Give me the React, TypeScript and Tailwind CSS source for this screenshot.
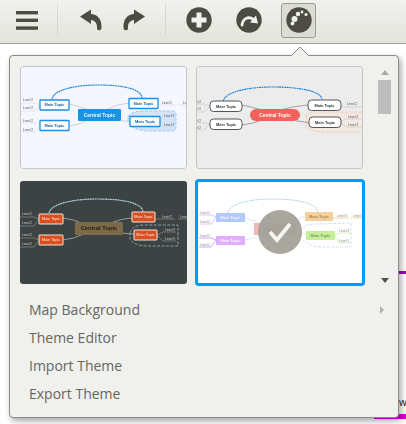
import React from "react";

const FONT = "'Liberation Sans', sans-serif";

type Box = { x: number; y: number; w: number; h: number };
type Label = { x: number; y: number; s: string };
type Theme = {
  bg: string;
  line: string;
  curve: string;
  curveD: string;
  curveW: number;
  levelText: string;
  levelLine: string;
  boundaryD: string;
  boundaryStroke: string;
  boundaryFill: string;
  central: Box & { fill: string; text: string; rx: number; fs: number };
  mainStyle: { fill: string; stroke: string; text: string; rx: number; sw: number; weight: number };
  mains: Box[];
  levels: Label[];
  levelD: string;
  lineD: string;
};

const themes: Theme[] = [
  {
    bg: "#f4f7ff",
    line: "#c9ccd4",
    curve: "#1b7fd6",
    curveD: "M32 33 C34 23 58 19 78 19 C100 19 121 22 122 32",
    curveW: 1.1,
    levelText: "#555",
    levelLine: "#d8dbe2",
    boundaryD: "M108 50 Q112 45 124 45 H152 Q156 45 156 49 V61 Q156 65 152 65 H128 Q114 65 108 56 Z",
    boundaryStroke: "#8fc4ee",
    boundaryFill: "#d3e4f8",
    central: { x: 58, y: 43, w: 43, h: 12, fill: "#1b93e0", text: "#eaf6ff", rx: 1, fs: 5 },
    mainStyle: { fill: "#ffffff", stroke: "#1b8ee6", text: "#1a5fa5", rx: 0.5, sw: 1.3, weight: 700 },
    mains: [
      { x: 20, y: 34, w: 29, h: 10 },
      { x: 20, y: 54.5, w: 29, h: 10 },
      { x: 109, y: 32.5, w: 29, h: 10 },
      { x: 110, y: 50.5, w: 30, h: 10 },
    ],
    levels: [
      { x: 8, y: 35, s: "Level 2" },
      { x: 8, y: 43, s: "Level 2" },
      { x: 8, y: 56, s: "Level 2" },
      { x: 8, y: 65, s: "Level 2" },
      { x: 147, y: 38, s: "Level 2" },
      { x: 168, y: 38, s: "Level 3" },
      { x: 149, y: 51, s: "Level 3" },
      { x: 149, y: 60, s: "Level 3" },
    ],
    levelD: "M20 39 Q16 37 14 37 H0 M20 39 Q17 44 14 45 H0 M20 59 Q16 57 14 57 H0 M20 59 Q17 65 14 66 H0 M138 39 H155 M158 39 H167 M140 55 Q142 52 143 52 H156 M140 55 Q142 61 143 61 H156",
    lineD: "M49 38 Q58 40 66 43 M49 60 Q58 59 66 55 M109 37 Q98 38 87 43 M101 55 H110",
  },
  {
    bg: "#ececec",
    line: "#999",
    curve: "#1b7fd6",
    curveD: "M27 35 C30 25 55 21 76 21 C100 21 124 24 126 33",
    curveW: 1.1,
    levelText: "#555",
    levelLine: "#ccc",
    boundaryD: "M110 50 Q112 46 120 46 L167 46 V66 H130 Q114 66 110 60 Z",
    boundaryStroke: "#f0c4ae",
    boundaryFill: "#f3e9e3",
    central: { x: 54, y: 43, w: 50, h: 12, fill: "#f2615c", text: "#fff", rx: 6, fs: 5 },
    mainStyle: { fill: "#ffffff", stroke: "#555", text: "#333", rx: 3.5, sw: 1, weight: 700 },
    mains: [
      { x: 14, y: 35, w: 32, h: 10.5 },
      { x: 14, y: 53, w: 32, h: 10.5 },
      { x: 112, y: 34, w: 33, h: 10.5 },
      { x: 113, y: 51, w: 32, h: 10.5 },
    ],
    levels: [
      { x: 0, y: 37, s: "Level 2" },
      { x: 0, y: 44, s: "Level 2" },
      { x: 0, y: 56, s: "Level 2" },
      { x: 0, y: 63, s: "Level 2" },
      { x: 156, y: 39, s: "Level 2" },
      { x: 157, y: 52, s: "Level 3" },
      { x: 157, y: 60, s: "Level 3" },
    ],
    levelD: "M14 40 L8 38 H0 M14 40 L8 46 H0 M14 58 L8 57 H0 M14 58 L8 64 H0 M145 39 L148 41 H165 M145 55 L150 53 H166 M145 57 L150 61 H166",
    lineD: "M46 39 Q56 41 66 44 M46 59 Q56 58 66 54 M112 39 Q98 40 84 44 M100 55 Q106 55 113 57",
  },
  {
    bg: "#3d4242",
    line: "#a0a6a6",
    curve: "#a8d4dc",
    curveD: "M29 32 C31 22 56 18 77 18 C100 18 122 21 123 31",
    curveW: 1.2,
    levelText: "#ccc",
    levelLine: "#8a9090",
    boundaryD: "M110 52 Q112 45 122 44 L158 44 V65 H128 Q114 65 110 58 Z",
    boundaryStroke: "#8fa8a8",
    boundaryFill: "none",
    central: { x: 55, y: 41, w: 48, h: 13, fill: "#7d6a48", text: "#241e10", rx: 1, fs: 5.8 },
    mainStyle: { fill: "#d94f1e", stroke: "#f2e6e0", text: "#fbe9df", rx: 0.5, sw: 1, weight: 400 },
    mains: [
      { x: 19, y: 33, w: 24, h: 10 },
      { x: 19, y: 54, w: 24, h: 10 },
      { x: 112, y: 31, w: 23, h: 10 },
      { x: 114, y: 49, w: 23, h: 10 },
    ],
    levels: [
      { x: 7, y: 34, s: "Level 2" },
      { x: 7, y: 43, s: "Level 2" },
      { x: 7, y: 55, s: "Level 2" },
      { x: 7, y: 64, s: "Level 2" },
      { x: 147, y: 37, s: "Level 2" },
      { x: 165, y: 37, s: "Level 3" },
      { x: 150, y: 50, s: "Level 3" },
      { x: 150, y: 59, s: "Level 3" },
    ],
    levelD: "M19 38 L14 36 H0 M19 38 L14 45 H0 M19 59 L14 57 H0 M19 59 L14 66 H0 M135 38 H155 M158 38 H167 M137 54 L143 51 H156 M137 54 L143 60 H156",
    lineD: "M43 37 Q54 38 66 44 M43 59 Q54 58 66 52 M112 37 Q98 38 87 44 M103 52 Q108 53 114 53",
  },
];

function MindMap({ t }: { t: Theme }) {
  const m = t.mainStyle;
  return (
    <svg viewBox="0 0 167 103" className="block h-full w-full">
      <path d={t.boundaryD} fill={t.boundaryFill} stroke={t.boundaryStroke} strokeWidth="0.9" strokeDasharray="3 1.5" />
      <path d={t.lineD} fill="none" stroke={t.line} strokeWidth="0.9" />
      <path d={t.levelD} fill="none" stroke={t.levelLine} strokeWidth="0.7" />
      <path d={t.curveD} fill="none" stroke={t.curve} strokeWidth={t.curveW} strokeDasharray="2 0.5" />
      {t.levels.map((l, i) => (
        <text key={i} x={l.x} y={l.y} fontSize="3.2" fill={t.levelText} fontFamily={FONT} textAnchor="middle">
          {l.s}
        </text>
      ))}
      <rect x={t.central.x} y={t.central.y} width={t.central.w} height={t.central.h} rx={t.central.rx} fill={t.central.fill} />
      <text
        x={t.central.x + t.central.w / 2}
        y={t.central.y + t.central.h / 2 + 1.7}
        textAnchor="middle"
        fontSize={t.central.fs}
        fontWeight="700"
        fill={t.central.text}
        fontFamily={FONT}
      >
        Central Topic
      </text>
      {t.mains.map((b, i) => (
        <g key={i}>
          <rect x={b.x} y={b.y} width={b.w} height={b.h} rx={m.rx} fill={m.fill} stroke={m.stroke} strokeWidth={m.sw} />
          <text x={b.x + b.w / 2} y={b.y + b.h / 2 + 1.3} textAnchor="middle" fontSize="3.9" fontWeight={m.weight} fill={m.text} fontFamily={FONT}>
            Main Topic
          </text>
        </g>
      ))}
    </svg>
  );
}

function SelectedMap() {
  const lv = { fontSize: 3.2, fill: "#888", fontFamily: FONT, textAnchor: "middle" } as const;
  const main = { fontSize: 3.9, fontWeight: 700, fontFamily: FONT, textAnchor: "middle" } as const;
  return (
    <svg viewBox="0 0 164 101" className="block h-full w-full">
      <path d="M105 47 Q108 42 118 42 L153 41 V65 H124 Q112 65 105 58" fill="none" stroke="#c6def6" strokeWidth="0.9" strokeDasharray="3 1.5" />
      <path d="M47 36 Q58 38 66 44 M47 58 Q56 57 66 52 M107 34 Q97 36 86 44 M98 52 H108" fill="none" stroke="#dfe4ee" strokeWidth="0.9" />
      <path d="M18 35 L13 33 H1 M18 35 L13 42 H1" fill="none" stroke="#e3aef2" strokeWidth="0.8" />
      <path d="M18 58 L13 56 H1 M18 58 L13 65 H1" fill="none" stroke="#c98cf0" strokeWidth="0.8" />
      <path d="M135 36 H151 M153 36 H164" fill="none" stroke="#f3cb8e" strokeWidth="0.8" />
      <path d="M137 53 L141 51 H153 M137 54 L141 61 H153" fill="none" stroke="#cdeea8" strokeWidth="0.8" />
      <path d="M30 31 C32 21 54 17 74 17 C96 17 118 20 120 30" fill="none" stroke="#aecff0" strokeWidth="0.9" strokeDasharray="2 0.5" />
      <text x="7" y="32" {...lv}>Level 2</text>
      <text x="7" y="40.5" {...lv}>Level 2</text>
      <text x="7" y="54.5" {...lv}>Level 2</text>
      <text x="7" y="63.5" {...lv}>Level 2</text>
      <text x="144" y="35" {...lv}>Level 3</text>
      <text x="160" y="35" {...lv}>Level 3</text>
      <text x="146" y="50" {...lv}>Level 3</text>
      <text x="146" y="59.5" {...lv}>Level 3</text>
      <rect x="56" y="41" width="42" height="12" fill="#efb8b8" />
      <text x="77" y="48.6" textAnchor="middle" fontSize="5" fontWeight="700" fill="#b98a8a" fontFamily={FONT}>Central Topic</text>
      <rect x="18" y="31" width="29" height="9" rx="0.5" fill="#b3c8fb" />
      <text x="32.5" y="36.8" {...main} fill="#eef2ff">Main Topic</text>
      <rect x="18" y="54" width="29" height="9" rx="0.5" fill="#e0aefc" />
      <text x="32.5" y="59.8" {...main} fill="#fbf2ff">Main Topic</text>
      <rect x="107" y="30" width="28" height="9" rx="0.5" fill="#f4cf9a" />
      <text x="121" y="35.8" {...main} fill="#a88a5e">Main Topic</text>
      <rect x="108" y="49" width="29" height="9" rx="0.5" fill="#c6ee9a" />
      <text x="122.5" y="54.8" {...main} fill="#7a9a5c">Main Topic</text>
    </svg>
  );
}

function Round({ children }: { children: React.ReactNode }) {
  return (
    <svg viewBox="0 0 26 26" className="h-[26px] w-[26px]">
      <circle cx="13" cy="13" r="12.7" fill="#4d4c44" />
      {children}
    </svg>
  );
}

const ARROW = "M1 8.5 L12 1.5 V6 C18 6 23 11 22.5 20 A2.4 2.4 0 0 1 18 21 C18.5 16 16.5 12.5 12 12 V16 Z";

export default function App() {
  return (
    <div className="relative h-[424px] w-[406px] overflow-hidden bg-white font-['Open_Sans','Noto_Sans',sans-serif]">
      {/* toolbar */}
      <div className="flex h-[44px] items-center border-b border-[#a3a39e] bg-gradient-to-b from-[#f1f1ed] to-[#e4e4de] pb-[3px]">
        <svg viewBox="0 0 22 19" className="ml-[16px] h-[19px] w-[22px]">
          <rect x="0" y="0" width="22" height="3.4" fill="#4d4c44" />
          <rect x="0" y="7.6" width="22" height="3.4" fill="#4d4c44" />
          <rect x="0" y="15.4" width="22" height="3.4" fill="#4d4c44" />
        </svg>
        <div className="ml-[19px] h-[32px] w-px bg-[#d8d8d2]" />
        <svg viewBox="0 0 24 24" className="ml-[21px] h-[24px] w-[24px]">
          <path d={ARROW} fill="#4d4c44" />
        </svg>
        <svg viewBox="0 0 24 24" className="ml-[19px] h-[24px] w-[24px] -scale-x-100">
          <path d={ARROW} fill="#4d4c44" />
        </svg>
        <div className="ml-[19px] h-[32px] w-px bg-[#d8d8d2]" />
        <div className="ml-[20px]">
          <Round>
            <path d="M10.5 5.5h5v5h5v5h-5v5h-5v-5h-5v-5h5z" fill="#f1f1ed" />
          </Round>
        </div>
        <div className="ml-[24px]">
          <Round>
            <path d="M6 18 C7 11 13 9 17.5 12.5" fill="none" stroke="#f1f1ed" strokeWidth="2.8" strokeLinecap="round" />
            <path d="M14 15.5 L22 16.5 L20 8.5 Z" fill="#f1f1ed" />
          </Round>
        </div>
        <div className="ml-[19px] flex h-[35px] w-[35px] items-center justify-center rounded-[3px] border border-[#9c9c96] bg-[#dcdcd5]">
          <Round>
            <circle cx="8.5" cy="12" r="3" fill="#f1f1ed" />
            <circle cx="6.5" cy="16.5" r="1.9" fill="#f1f1ed" />
            <circle cx="12" cy="7" r="2.2" fill="#f1f1ed" />
            <circle cx="16" cy="5" r="1.4" fill="#f1f1ed" />
            <circle cx="20" cy="7.5" r="1.6" fill="#f1f1ed" />
          </Round>
        </div>
      </div>

      {/* page content peeking out behind the popover */}
      <div className="absolute left-[399px] top-[271px] h-[3px] w-[7px] bg-[#9900cc]" />
      <div className="absolute left-[374px] top-[414px] h-[5px] w-[32px] bg-[#dd00dd]" />
      <div className="absolute left-[399px] top-[395px] text-[10px] leading-[14px] text-[#222]">w</div>

      {/* popover */}
      <div className="absolute left-[9px] top-[55px] h-[363px] w-[390px] rounded-[4px] border border-[#8c8c86] bg-[#f0f0ec] shadow-[2px_3px_6px_rgba(0,0,0,0.35)]">
        <svg viewBox="0 0 18 9" className="absolute left-[281px] top-[-9px] h-[9px] w-[18px]">
          <path d="M0 9 L9 0 L18 9 Z" fill="#f0f0ec" />
          <path d="M0 9 L9 0 L18 9" fill="none" stroke="#8c8c86" />
        </svg>

        <div className="flex pl-[10px] pt-[10px]">
          <div className="grid w-[345px] grid-cols-[167px_169px] gap-x-[9px]">
            <div className="relative h-[103px] w-[167px] overflow-hidden rounded-[3px] bg-[#f4f7ff] [filter:blur(0.45px)]">
              <MindMap t={themes[0]} />
              <div className="absolute inset-0 rounded-[3px] border border-[#c4c6cc]" />
            </div>
            <div className="relative h-[103px] w-[167px] overflow-hidden rounded-[3px] bg-[#ececec] [filter:blur(0.45px)]">
              <MindMap t={themes[1]} />
              <div className="absolute inset-0 rounded-[3px] border border-[#c4c6c0]" />
            </div>
            <div className="mt-[12px] h-[103px] w-[167px] overflow-hidden rounded-[3px] bg-[#3d4242] [filter:blur(0.45px)]">
              <MindMap t={themes[2]} />
            </div>
            <div className="relative mt-[10px] -ml-px h-[107px] w-[170px] overflow-hidden rounded-[4px] border-[3px] border-[#0099ff] bg-white">
              <div className="h-full w-full [filter:blur(0.45px)]">
                <SelectedMap />
              </div>
              <div className="absolute left-[60px] top-[28px] flex h-[44px] w-[44px] items-center justify-center rounded-full bg-[#a3a198]/95">
                <svg viewBox="0 0 24 24" className="h-[24px] w-[24px]">
                  <path d="M2 12 L9 20 L22 4" fill="none" stroke="#f4f4f0" strokeWidth="3.8" />
                </svg>
              </div>
            </div>
          </div>

          {/* scrollbar */}
          <div className="ml-[13px] flex h-[218px] w-[13px] flex-col items-center pt-[4px]">
            <div className="h-0 w-0 border-x-[4px] border-b-[5px] border-x-transparent border-b-[#a8a8a8]" />
            <div className="mt-[5px] h-[34px] w-[13px] bg-[#bdbdbd]" />
            <div className="flex-1" />
            <div className="mb-[1px] h-0 w-0 border-x-[4px] border-t-[5px] border-x-transparent border-t-[#505050]" />
          </div>
        </div>

        <ul className="mt-[10px] text-[14px] leading-[28px] text-[#666660]">
          <li className="relative pl-[19px]">
            Map Background
            <span className="absolute right-[14px] top-[10px] h-0 w-0 border-y-[4px] border-l-[4px] border-y-transparent border-l-[#b0b0ac]" />
          </li>
          <li className="pl-[19px]">Theme Editor</li>
          <li className="pl-[19px]">Import Theme</li>
          <li className="pl-[19px]">Export Theme</li>
        </ul>
      </div>
    </div>
  );
}
